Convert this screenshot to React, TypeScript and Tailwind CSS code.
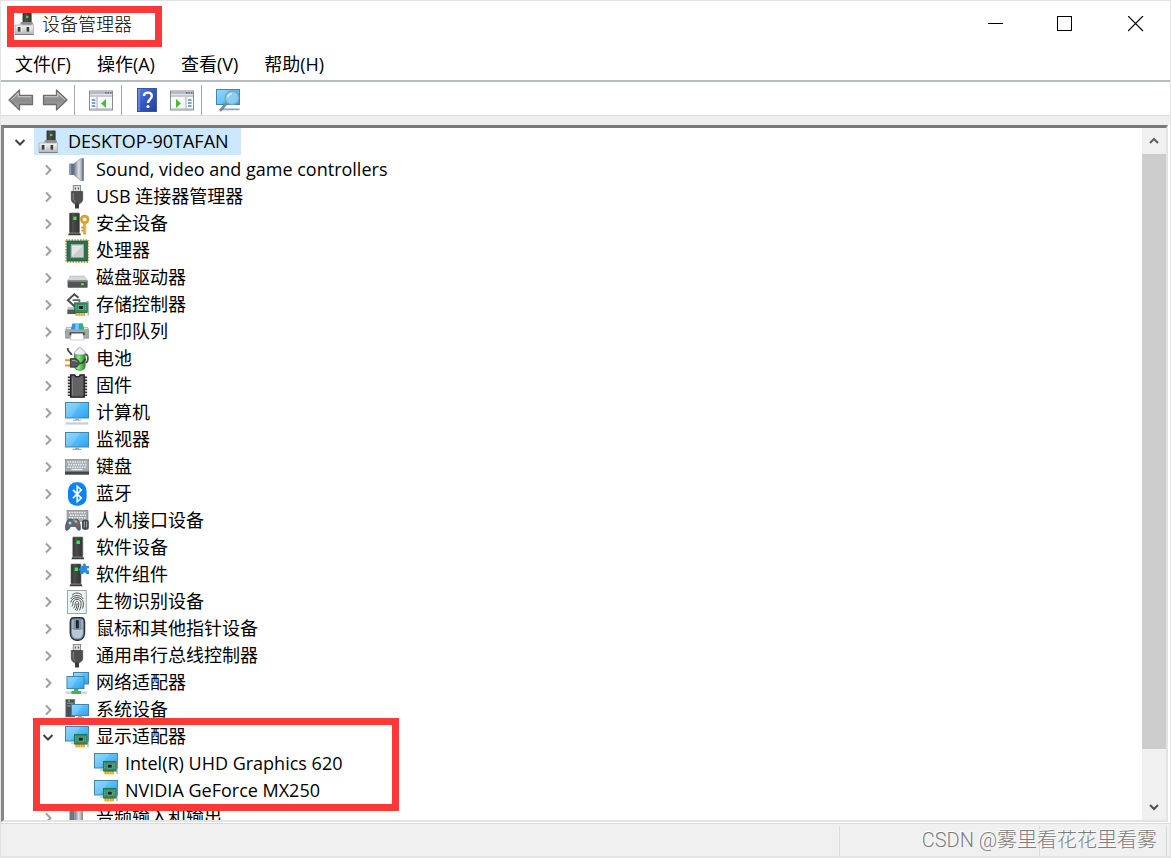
import type { ReactNode } from "react";

const Svg = ({ children, className = "h-6 w-6" }: { children: ReactNode; className?: string }) => (
  <svg viewBox="0 0 24 24" className={`${className} shrink-0`} aria-hidden="true">
    {children}
  </svg>
);

const Defs = () => (
  <svg className="absolute h-0 w-0" aria-hidden="true">
    <defs>
      <linearGradient id="screen" x1="0" y1="0" x2="1" y2="1">
        <stop offset="0" stopColor="#7fd2fb" />
        <stop offset="0.5" stopColor="#54bdf9" />
        <stop offset="1" stopColor="#2ba0ee" />
      </linearGradient>
      <linearGradient id="metal" x1="0" y1="0" x2="1" y2="0">
        <stop offset="0" stopColor="#6f7a84" />
        <stop offset="0.5" stopColor="#dbe1e6" />
        <stop offset="1" stopColor="#7d8791" />
      </linearGradient>
      <linearGradient id="tower" x1="0" y1="0" x2="1" y2="0">
        <stop offset="0" stopColor="#2b2b2b" />
        <stop offset="0.3" stopColor="#4d4d4d" />
        <stop offset="1" stopColor="#333333" />
      </linearGradient>
      <linearGradient id="silver" x1="0" y1="0" x2="0" y2="1">
        <stop offset="0" stopColor="#f4f4f4" />
        <stop offset="1" stopColor="#b4b6b8" />
      </linearGradient>
      <linearGradient id="arrow" x1="0" y1="0" x2="0" y2="1">
        <stop offset="0" stopColor="#b5b5b5" />
        <stop offset="0.5" stopColor="#8b8b8b" />
        <stop offset="1" stopColor="#a8a8a8" />
      </linearGradient>
      <linearGradient id="help" x1="0" y1="0" x2="1" y2="1">
        <stop offset="0" stopColor="#5c7fe0" />
        <stop offset="0.5" stopColor="#3355c4" />
        <stop offset="1" stopColor="#2340a4" />
      </linearGradient>
      <linearGradient id="cell" x1="0" y1="0" x2="1" y2="0">
        <stop offset="0" stopColor="#2c9a2f" />
        <stop offset="0.35" stopColor="#8cea80" />
        <stop offset="1" stopColor="#1f8f26" />
      </linearGradient>
    </defs>
  </svg>
);

const Screen = ({ x, y, w, h }: { x: number; y: number; w: number; h: number }) => (
  <>
    <rect x={x + 0.5} y={y + 0.5} width={w - 1} height={h - 1} fill="url(#screen)" stroke="#4385ad" />
    <path d={`M${x + 1} ${y + 1}h${w * 0.6}l${-w * 0.4} ${h - 2}h${-w * 0.2}z`} fill="#fff" opacity="0.14" />
  </>
);

const Tower = ({ x }: { x: number }) => (
  <>
    <rect x={x} y="1" width="10" height="20" rx="0.8" fill="url(#tower)" stroke="#6a6a6a" strokeWidth="0.6" />
    <path d={`M${x - 1.5} 23.3l1-2.3h11l1 2.3z`} fill="#3a3a3a" />
    <path d={`M${x - 0.5} 21.2h11`} stroke="#9b9b9b" strokeWidth="0.7" />
    <rect x={x + 3.7} y="4.6" width="3.4" height="3.4" fill="#2bf23a" />
  </>
);

const Card = ({ x, y }: { x: number; y: number }) => (
  <>
    <path d={`M${x + 1} ${y + 9}h9.5v4h-9.5z`} fill="#f0a21c" />
    <path d={`M${x + 3.5} ${y + 10}v3M${x + 6} ${y + 10}v3M${x + 8.5} ${y + 10}v3`} stroke="#fbd06b" strokeWidth="0.9" />
    <rect x={x} y={y} width="13" height="9.8" fill="#2c8c60" stroke="#1c6545" strokeWidth="0.7" />
    <rect x={x + 3.8} y={y + 2.8} width="5" height="4" fill="#20242a" stroke="#7fb79a" strokeWidth="0.8" />
    <path d={`M${x + 1.5} ${y + 2}v6M${x + 10.8} ${y + 2}v5`} stroke="#9fd2b4" strokeWidth="0.9" strokeDasharray="1 1" />
    <path d={`M${x + 12} ${y - 1.2}h1.6v14`} fill="none" stroke="#8f9599" strokeWidth="1" />
  </>
);

const ComputerIcon = () => (
  <Svg>
    <rect x="9.6" y="0.5" width="9" height="12" rx="0.6" fill="url(#tower)" />
    <rect x="13" y="3.8" width="2.4" height="2.2" fill="#35e044" />
    <path d="M7 12.5l1.2-2.6h11l1.2 2.6z" fill="#8d8d8d" />
    <path d="M2 13h18.5v9.5H2z" fill="url(#silver)" stroke="#a3a3a3" strokeWidth="0.7" />
    <path d="M2 22.5h18.5" stroke="#7e7e7e" />
    <rect x="4.8" y="15" width="2.8" height="4.6" fill="#3c3c3c" />
    <rect x="13.6" y="15" width="2.8" height="4.6" fill="#3c3c3c" />
    <path d="M8.2 15v4.6M17 15v4.6" stroke="#fff" strokeWidth="0.8" />
  </Svg>
);

const SpeakerIcon = () => (
  <Svg>
    <rect x="4.3" y="5.6" width="5" height="11.4" fill="#5c7489" />
    <path d="M5.5 6v10.6" stroke="#8fa5b6" strokeWidth="1.2" />
    <path d="M9 5.6L16.3.3h2.2v22.8h-2.2L9 17z" fill="url(#metal)" />
    <path d="M18 .3v22.8" stroke="#5c6b77" strokeWidth="1.2" />
    <path d="M9 5.6L16.3.3M9 17l7.3 6" stroke="#8795a0" strokeWidth="0.7" />
  </Svg>
);

const UsbIcon = () => (
  <Svg>
    <rect x="8.2" y="0.4" width="7.4" height="6.6" fill="#dcdcdc" stroke="#777" strokeWidth="0.8" />
    <path d="M10.4 2.4v2.2M13.4 2.4v2.2" stroke="#555" strokeWidth="1.1" />
    <path d="M6.3 6.5h11.4v7.2c0 2.6-1.2 3.8-3.2 5.1H9.5c-2-1.300-3.200-2.500-3.200-5.100z" fill="#4f4f4f" stroke="#333" strokeWidth="0.6" />
    <path d="M8.300 8v6.500l2 2.500" stroke="#8a8a8a" fill="none" />
    <path d="M10 18.500h4v5h-4z" fill="#3a3a3a" />
  </Svg>
);

const SecurityIcon = () => (
  <Svg>
    <Tower x={4.5} />
    <circle cx="19.7" cy="7.4" r="3.3" fill="none" stroke="#d9a02a" strokeWidth="2.8" />
    <path d="M19.7 10.500v12" stroke="#d9a02a" strokeWidth="3" />
    <path d="M18.200 15.500h-1.800M18.200 18.700h-1.800" stroke="#c38d1d" strokeWidth="1.800" />
    <path d="M20.200 11.500v10" stroke="#f5cf72" strokeWidth="0.800" />
  </Svg>
);

const CpuIcon = () => (
  <Svg>
    <rect x="1" y="1" width="22.4" height="22" fill="none" stroke="#c9a648" strokeWidth="1.8" strokeDasharray="1.4 1.4" />
    <rect x="2" y="2" width="20.4" height="20" fill="#2d6f55" stroke="#1f5a43" strokeWidth="0.8" />
    <rect x="6.2" y="5.8" width="12.2" height="12.4" fill="#e4e6e5" stroke="#9fb5a9" />
    <path d="M7 17.5L17.8 6.4v11.1z" fill="#cbcecd" />
  </Svg>
);

const DiskIcon = () => (
  <Svg>
    <path d="M5.4 10h13.8l3.4 4.6H2.6z" fill="#d5d6d7" stroke="#aaa" strokeWidth="0.5" />
    <rect x="2.6" y="14.4" width="20" height="7.4" rx="0.8" fill="#505254" />
    <path d="M2.8 15.2h19.6" stroke="#85888a" strokeWidth="1.2" />
    <rect x="16" y="17.2" width="2.8" height="2" fill="#4cf04e" />
  </Svg>
);

const StorageIcon = () => (
  <Svg>
    <path d="M13.5 4.700L9.300 1.300 2.900 7.200l6.400 5.900 2-1.800" fill="none" stroke="#4a4e51" strokeWidth="2" />
    <path d="M7.600 7.200h6.800v2" fill="none" stroke="#5e6264" strokeWidth="1.800" />
    <path d="M2.500 14h7.500v2.500H2.500z" fill="#c3c6c8" />
    <rect x="2.300" y="16.500" width="9" height="4.600" fill="#54585b" />
    <Card x={9.6} y={9.8} />
  </Svg>
);

const PrinterIcon = () => (
  <Svg>
    <path d="M1.4 7.6h21.4l1 3.6v7H.4v-7z" fill="#a3a8ad" stroke="#777d82" strokeWidth="0.6" />
    <path d="M1.6 8.4h21" stroke="#e0e3e6" strokeWidth="1.5" />
    <path d="M5.800 9.500L7.300 3.400h10.400l1.500 6.100z" fill="#2f94e8" />
    <path d="M10.500 3.400h3.200v6.100h-3.500z" fill="#7accff" />
    <path d="M15 3.400h2.700l1.500 6.100H16z" fill="#3eb75a" />
    <rect x="4.6" y="12.3" width="15" height="3" fill="#34393d" />
    <path d="M6.4 13.400h11.400l1.200 6.600H5.200z" fill="#fff" stroke="#aeb2b5" strokeWidth="0.6" />
    <rect x="20" y="9.700" width="2" height="1.600" fill="#5ae35b" />
  </Svg>
);

const BatteryIcon = () => (
  <Svg>
    <path d="M20 7.500c4-.8 3.700 7.200.5 8.300" fill="none" stroke="#4b4f4f" strokeWidth="1.700" />
    <path d="M9.400 6h10.800v13c0 2.800-2 4.300-5.400 4.300s-5.400-1.500-5.400-4.300z" fill="url(#cell)" stroke="#3a6f3b" strokeWidth="0.700" />
    <path d="M9.400 7c0-3 1.500-3.700 3-4.200 0-3 4.800-3 4.800 0 1.500.5 3 1.200 3 4.200-3 1.400-7.800 1.400-10.800 0z" fill="#ecedf8" stroke="#8a8e9b" strokeWidth="0.700" />
    <path d="M2.600 1c0 4 3 4.400 4.200 7M14.500 16.500c3.500 0 5-2.300 6-5" fill="none" stroke="#3b3f3f" strokeWidth="1.700" />
    <path d="M0 13.200h6M0 18.600h6" stroke="#d9a326" strokeWidth="2" />
    <path d="M5.400 11.600h2.800c4 0 6 1.800 6 4.300s-2 4.300-6 4.300H5.400z" fill="#55595b" stroke="#25292a" strokeWidth="0.800" />
    <path d="M7 13.600h2c2 0 2.800.7 3.200 1.500" stroke="#a4a8aa" fill="none" />
  </Svg>
);

const FirmwareIcon = () => (
  <Svg>
    <path d="M4.300 2.500v19.500M20.600 2.500v19.500" stroke="#333" strokeWidth="3" strokeDasharray="1.700 1.300" />
    <path d="M5.700.8h4c.3 2.700 5.200 2.700 5.500 0h4v22.400H5.700z" fill="#636363" stroke="#1c1c1c" strokeWidth="1.300" />
    <path d="M7.500 4v17.400" stroke="#808080" />
  </Svg>
);

const PcIcon = () => (
  <Svg>
    <Screen x={0} y={1} w={24} h={16.5} />
    <path d="M10 17.500h4v1.300h2.300v1H7.700v-1H10z" fill="#a7b0b6" />
    <path d="M1.500 21.300h21l1.300 2.200H.2z" fill="#bfc5c9" />
    <path d="M2 21.800h20" stroke="#e8ebed" strokeWidth="0.800" />
  </Svg>
);

const MonitorIcon = () => (
  <Svg>
    <Screen x={0} y={4} w={24} h={15.5} />
    <path d="M10 19.500h4v1.300h2.500v1.100h-9v-1.100H10z" fill="#9faab1" />
  </Svg>
);

const KeyboardIcon = () => (
  <Svg>
    <rect x="0.300" y="4.300" width="23.400" height="15" fill="#a4aab0" stroke="#80868c" strokeWidth="0.600" />
    <path d="M2.300 7h19.500M3.300 9.600h18M2.300 12.200h19.500" stroke="#eef0f1" strokeWidth="1.600" strokeDasharray="1.500 0.900" />
    <path d="M6.500 14.500h11" stroke="#eef0f1" strokeWidth="1.200" />
    <rect x="0" y="16.500" width="24" height="3" fill="#42474b" />
  </Svg>
);

const BluetoothIcon = () => (
  <Svg>
    <rect x="3" y="0.200" width="18.600" height="23.600" rx="8.500" fill="#0a84f4" />
    <path d="M7.900 7.900l8.400 8.200-4.100 3.700V4.200l4.100 3.700-8.400 8.200" fill="none" stroke="#fff" strokeWidth="1.600" />
  </Svg>
);

const HidIcon = () => (
  <Svg>
    <rect x="2" y="1.300" width="21" height="11" fill="#a2a7ab" stroke="#7d8287" strokeWidth="0.600" />
    <path d="M4 3.600h17.500M5 6.200h16M4 8.800h17.500" stroke="#f2f3f4" strokeWidth="1.500" strokeDasharray="1.500 1" />
    <path d="M3.500 10.500c2-1 3.500 0 4.400 0 1 0 2.600-1 4.600 0 2.300 1.500 3.500 6.500 2.800 10-1.300 2.300-3.500-.3-4.600-3H5.400c-1 2.700-3.400 5.300-4.800 3-.6-3.500.6-8.500 2.900-10z" fill="#5c6875" stroke="#37414c" strokeWidth="0.600" />
    <path d="M3.400 14h3.200M5 12.400v3.200" stroke="#dce5ed" />
    <circle cx="11" cy="12.600" r="1.300" fill="#f0ae2c" />
    <circle cx="12.800" cy="14.600" r="1.200" fill="#e94b3b" />
    <circle cx="9.300" cy="11.400" r="1.300" fill="#4ba6f3" />
    <rect x="17" y="10.800" width="6.800" height="10" rx="2.500" fill="#414a52" />
    <path d="M19.300 12.500v6M21.600 12.500v6" stroke="#a8b1b8" strokeWidth="0.900" />
  </Svg>
);

const SoftDeviceIcon = () => (
  <Svg>
    <Tower x={7.8} />
  </Svg>
);

const SoftComponentIcon = () => (
  <Svg>
    <Tower x={6} />
    <path d="M15.300 3h2.600c-1.200-3.400 4-3.400 2.800 0H24v2.400c-2.600-.6-2.600 2.800 0 2.200V11h-3.300c.8-2-3-2-2.300 0h-3.100V7.700c-2 .4-2-2.600 0-2.200z" fill="#2e8bd9" />
  </Svg>
);

const FingerprintIcon = () => (
  <Svg>
    <rect x="2.500" y="0.500" width="18.800" height="23" fill="#eef4f2" stroke="#92aea6" />
    <g fill="none" stroke="#4f5557" strokeWidth="1">
      <path d="M7 5.300c2.500-3 7.500-3 10 0M5.800 9c2-4.500 10.400-4.500 12.400 0M5.700 12.500c1-6.500 11.600-6.500 12.600 0 .2 2 .1 4-.9 6" />
      <path d="M7 16.500c1.200-1.600.7-3.200 1-4.200.8-4 7.200-4 8 0 .2 3-.2 5.500-1.500 8" />
      <path d="M8.600 18.300c1.700-2 1.400-4 1.700-5.500.4-2 3-2 3.400 0 .1 3.200-.6 5.700-2 8" />
      <path d="M12 13.300c0 3-.6 4.700-1.700 6.700" />
    </g>
  </Svg>
);

const MouseIcon = () => (
  <Svg>
    <path d="M8.800.8h7.200c2.400 0 3.500 1.700 3.500 4.500v10.400c0 4.500-2.700 7.600-7.100 7.600s-7.100-3.100-7.100-7.600V5.300c0-2.800 1.100-4.500 3.500-4.500z" fill="#7c90a8" stroke="#2e3338" strokeWidth="1.500" />
    <path d="M7 11.500v4.200c0 3.300 2 5.600 5.400 5.600s5.400-2.300 5.400-5.600v-4.200c-3 2-7.800 2-10.800 0z" fill="#b8c8d9" />
    <path d="M7.800 3v8M17 3v8" stroke="#a9bacb" strokeWidth="1.400" />
    <rect x="10.900" y="3" width="2.900" height="8.500" rx="1" fill="#20242a" />
  </Svg>
);

const NetworkIcon = () => (
  <Svg>
    <Screen x={8} y={1} w={16} h={12.5} />
    <path d="M.8 20.500h21.400v2.300H.8z" fill="#cbd0d2" />
    <Screen x={1.5} y={5} w={18} h={13} />
    <path d="M9 18h4.500v2h2.500v3H6.500v-3H9z" fill="#41b659" />
  </Svg>
);

const SystemIcon = () => (
  <Svg>
    <rect x="0.800" y="1.300" width="9" height="17.700" fill="#4a4f53" stroke="#777d81" strokeWidth="0.600" />
    <path d="M2 5.200h6.500M2 8h6.500" stroke="#9aa1a6" />
    <rect x="3" y="2.300" width="2" height="1.400" fill="#4ce04d" />
    <Screen x={6} y={6} w={18} h={12} />
    <path d="M13 18h4v1.200h2v.9h-8v-.9h2z" fill="#a2acb3" />
  </Svg>
);

const DisplayIcon = () => (
  <Svg>
    <Screen x={0} y={1} w={24} h={15.5} />
    <path d="M6 17.600h4v1H6z" fill="#9faab1" />
    <Card x={9.4} y={9.3} />
  </Svg>
);

const AudioIcon = () => (
  <Svg>
    <rect x="4.500" y="3" width="5" height="20" fill="#6d7780" />
    <rect x="9.500" y="1" width="8.500" height="23" fill="url(#metal)" />
  </Svg>
);

const Chevron = ({ open }: { open?: boolean }) =>
  open ? (
    <svg viewBox="0 0 12 12" className="h-3 w-3" aria-hidden="true">
      <path d="M1.500 4l4.500 4.500L10.500 4" fill="none" stroke="#404040" strokeWidth="2" />
    </svg>
  ) : (
    <svg viewBox="0 0 12 12" className="h-3 w-3" aria-hidden="true">
      <path d="M4 1.500L8.500 6 4 10.500" fill="none" stroke="#a0a0a0" strokeWidth="2" />
    </svg>
  );

type Device = { label: string; icon: ReactNode; children?: Device[] };

const devices: Device[] = [
  { label: "Sound, video and game controllers", icon: <SpeakerIcon /> },
  { label: "USB 连接器管理器", icon: <UsbIcon /> },
  { label: "安全设备", icon: <SecurityIcon /> },
  { label: "处理器", icon: <CpuIcon /> },
  { label: "磁盘驱动器", icon: <DiskIcon /> },
  { label: "存储控制器", icon: <StorageIcon /> },
  { label: "打印队列", icon: <PrinterIcon /> },
  { label: "电池", icon: <BatteryIcon /> },
  { label: "固件", icon: <FirmwareIcon /> },
  { label: "计算机", icon: <PcIcon /> },
  { label: "监视器", icon: <MonitorIcon /> },
  { label: "键盘", icon: <KeyboardIcon /> },
  { label: "蓝牙", icon: <BluetoothIcon /> },
  { label: "人机接口设备", icon: <HidIcon /> },
  { label: "软件设备", icon: <SoftDeviceIcon /> },
  { label: "软件组件", icon: <SoftComponentIcon /> },
  { label: "生物识别设备", icon: <FingerprintIcon /> },
  { label: "鼠标和其他指针设备", icon: <MouseIcon /> },
  { label: "通用串行总线控制器", icon: <UsbIcon /> },
  { label: "网络适配器", icon: <NetworkIcon /> },
  { label: "系统设备", icon: <SystemIcon /> },
  {
    label: "显示适配器",
    icon: <DisplayIcon />,
    children: [
      { label: "Intel(R) UHD Graphics 620", icon: <DisplayIcon /> },
      { label: "NVIDIA GeForce MX250", icon: <DisplayIcon /> },
    ],
  },
  { label: "音频输入和输出", icon: <AudioIcon /> },
];

function Row({ device, open, leaf, selected }: { device: Device; open?: boolean; leaf?: boolean; selected?: boolean }) {
  return (
    <div className="flex h-[27px] items-center">
      {leaf ? (
        <span className="w-[30px]" />
      ) : (
        <button type="button" aria-label={device.label} className="flex h-full w-[30px] items-center justify-center pl-0.5">
          <Chevron open={open} />
        </button>
      )}
      <span className={`flex h-full items-center gap-[7px] pr-3 pl-[3px] ${selected ? "bg-[#cce8ff]" : ""}`}>
        {device.icon}
        <span className="whitespace-nowrap">{device.label}</span>
      </span>
    </div>
  );
}

const Arrow = ({ flip }: { flip?: boolean }) => (
  <svg viewBox="0 0 26 24" className={flip ? "h-6 w-[26px] -scale-x-100" : "h-6 w-[26px]"} aria-hidden="true">
    <path d="M1 12L11.500 2v5.500h13v9h-13V22z" fill="url(#arrow)" stroke="#6e6e6e" strokeWidth="1.300" strokeLinejoin="round" />
    <path d="M3 12l7.300-7v3.700h13" fill="none" stroke="#d0d0d0" strokeWidth="0.900" />
  </svg>
);

const Panel = ({ right }: { right?: boolean }) => (
  <Svg>
    <rect x="0.500" y="3" width="23" height="19" fill="#f7f8f9" stroke="#878d92" />
    <rect x="1" y="3.500" width="22" height="2.800" fill="#b4babf" />
    <path d="M16 4.900h1.500M18.500 4.900H20M21 4.900h1.500" stroke="#555c63" strokeWidth="1.200" />
    <path d="M1 8h22" stroke="#b9bec2" strokeWidth="1.500" />
    {right ? (
      <>
        <path d="M16 9v12.500M1 21h22" stroke="#a8aeb3" />
        <path d="M18 12h3.500M18 15h3.500M18 18h3.500" stroke="#4b87c5" strokeWidth="1.500" />
        <path d="M6 11l5 4.500L6 20z" fill="#4cbb32" />
      </>
    ) : (
      <>
        <path d="M8 9v12.500M1 21h22" stroke="#a8aeb3" />
        <path d="M2.800 12h3.500M2.800 15h3.500M2.800 18h3.500" stroke="#4b87c5" strokeWidth="1.500" />
        <path d="M17 11l-5 4.500 5 4.500z" fill="#4cbb32" />
      </>
    )}
  </Svg>
);

const HelpIcon = () => (
  <svg viewBox="0 0 20 24" className="h-6 w-5" aria-hidden="true">
    <rect x="0.400" y="0.400" width="19" height="23.200" fill="url(#help)" stroke="#2b4193" strokeWidth="0.800" />
    <path d="M2 1v22" stroke="#7d97e4" strokeWidth="1.200" />
    <path d="M7 8c0-4.500 7.800-4.500 7.800 0 0 3.300-3.800 3.300-3.800 7" fill="none" stroke="#fff" strokeWidth="2.400" />
    <circle cx="11" cy="18.500" r="1.600" fill="#fff" />
  </svg>
);

const ScanIcon = () => (
  <Svg>
    <Screen x={0} y={1} w={24} h={16} />
    <path d="M4 20.500h20l-1 1.800H3z" fill="#7fa8bf" />
    <path d="M11 15L4 22.800" stroke="#7c868d" strokeWidth="2.600" />
    <circle cx="16" cy="9.800" r="6.800" fill="#8fd0f5" fillOpacity="0.900" stroke="#7fa3b8" strokeWidth="1.300" />
    <path d="M11.800 9c.5-2 2-3.200 4-3.200" stroke="#e8f7ff" fill="none" strokeWidth="1.200" />
  </Svg>
);

const Divider = ({ className }: { className: string }) => <span className={`w-px self-stretch bg-[#a8a8a8] ${className}`} />;

export default function App() {
  return (
    <div className="relative flex h-screen flex-col overflow-hidden border-t border-r border-l border-[#e3e3e3] bg-white font-['Open_Sans','Noto_Sans_CJK_SC',sans-serif] text-[18px] leading-[27px] text-black">
      <Defs />
      <header className="flex h-[46px] shrink-0 items-center">
        <div className="flex flex-1 items-center gap-[5px] pl-3">
          <ComputerIcon />
          <h1 className="font-light">设备管理器</h1>
        </div>
        <button type="button" aria-label="最小化" className="flex h-full w-[70px] items-center justify-center pl-px">
          <svg viewBox="0 0 16 16" className="h-4 w-4" aria-hidden="true">
            <path d="M0 7.500h15" stroke="#000" />
          </svg>
        </button>
        <button type="button" aria-label="最大化" className="flex h-full w-[70px] items-center justify-center">
          <svg viewBox="0 0 16 16" className="h-4 w-4" aria-hidden="true">
            <rect x="0.500" y="0.500" width="14" height="14" fill="none" stroke="#000" />
          </svg>
        </button>
        <button type="button" aria-label="关闭" className="flex h-full w-[70px] items-center justify-center pl-0.5">
          <svg viewBox="0 0 16 16" className="h-4 w-4" aria-hidden="true">
            <path d="M0 0l15 15M15 0L0 15" stroke="#000" strokeWidth="1.200" />
          </svg>
        </button>
      </header>

      <nav className="flex h-[33px] shrink-0 items-center gap-[26px] pt-0.5 pl-[14px]">
        <button type="button">文件(F)</button>
        <button type="button">操作(A)</button>
        <button type="button">查看(V)</button>
        <button type="button">帮助(H)</button>
      </nav>

      <div className="flex h-9 shrink-0 items-center border-t-2 border-b border-t-[#b8bbbd] border-b-[#dcdcdc] pt-[3px] pl-[7px]">
        <button type="button" aria-label="后退">
          <Arrow />
        </button>
        <button type="button" aria-label="前进" className="ml-2">
          <Arrow flip />
        </button>
        <Divider className="ml-[6px]" />
        <button type="button" aria-label="显示控制台树" className="ml-[14px]">
          <Panel />
        </button>
        <Divider className="ml-2" />
        <button type="button" aria-label="帮助" className="ml-[15px]">
          <HelpIcon />
        </button>
        <button type="button" aria-label="操作窗格" className="ml-[13px]">
          <Panel right />
        </button>
        <Divider className="ml-[7px]" />
        <button type="button" aria-label="扫描检测硬件改动" className="ml-[14px]">
          <ScanIcon />
        </button>
      </div>

      <div className="h-[9px] shrink-0 bg-[#efefef]" />

      <main className="mr-0.5 flex min-h-0 flex-1 border-t-[3px] border-r-2 border-b-2 border-l-[3px] border-t-[#7b7977] border-r-[#e3e3e3] border-b-[#e3e3e3] border-l-[#8a8886]">
        <div className="min-w-0 flex-1 overflow-hidden">
          <ul>
            <li>
              <Row device={{ label: "DESKTOP-90TAFAN", icon: <ComputerIcon /> }} open selected />
              <ul className="pt-px pl-7">
                {devices.map((device) => (
                  <li key={device.label}>
                    <Row device={device} open={Boolean(device.children)} />
                    {device.children && (
                      <ul className="pl-[29px]">
                        {device.children.map((child) => (
                          <li key={child.label}>
                            <Row device={child} leaf />
                          </li>
                        ))}
                      </ul>
                    )}
                  </li>
                ))}
              </ul>
            </li>
          </ul>
        </div>
        <div className="flex w-6 shrink-0 flex-col bg-[#f0f0f0]">
          <button type="button" aria-label="向上滚动" className="flex h-[26px] items-center justify-center">
            <svg viewBox="0 0 12 12" className="h-3 w-3" aria-hidden="true">
              <path d="M2 8l4-4 4 4" fill="none" stroke="#606060" strokeWidth="2" />
            </svg>
          </button>
          <div className="flex flex-1 flex-col">
            <div className="h-[93%] bg-[#cdcdcd]" />
          </div>
          <button type="button" aria-label="向下滚动" className="flex h-[26px] items-center justify-center">
            <svg viewBox="0 0 12 12" className="h-3 w-3" aria-hidden="true">
              <path d="M2 4l4 4 4-4" fill="none" stroke="#505050" strokeWidth="2" />
            </svg>
          </button>
        </div>
      </main>

      <footer className="mt-px flex h-[35px] shrink-0 justify-end border-t border-b-2 border-t-[#dadada] border-b-[#e4e4e4] bg-[#f0f0f0] pt-0.5 pr-[3px]">
        <span className="w-[200px] border-l border-[#dcdcdc]" />
        <span className="w-32 border-r border-l border-[#dcdcdc]" />
      </footer>

      <p className="absolute right-[13px] bottom-[3px] font-['Roboto','Noto_Sans_CJK_SC',sans-serif] text-[20px] leading-[30px] font-light text-[#7c7c7c] [text-shadow:-1px_-1px_0_#ffffff]">
        CSDN @雾里看花花里看雾
      </p>

      <div className="pointer-events-none absolute top-[53px] -left-px h-6 w-px bg-[#f4552a]" />
      <div className="pointer-events-none absolute top-[442px] -left-px h-4 w-px bg-[#444444]" />
      <div className="pointer-events-none absolute top-[560px] -left-px h-4 w-px bg-[#444444]" />
      <div className="pointer-events-none absolute top-[652px] -right-px h-4 w-px bg-[#333333]" />

      <div className="pointer-events-none absolute top-[5px] left-[6px] h-[41px] w-[155px] border-[7px] border-[#fd3838]" />
      <div className="pointer-events-none absolute top-[717px] left-8 h-[93px] w-[366px] border-[7px] border-[#fd3838]" />
    </div>
  );
}
